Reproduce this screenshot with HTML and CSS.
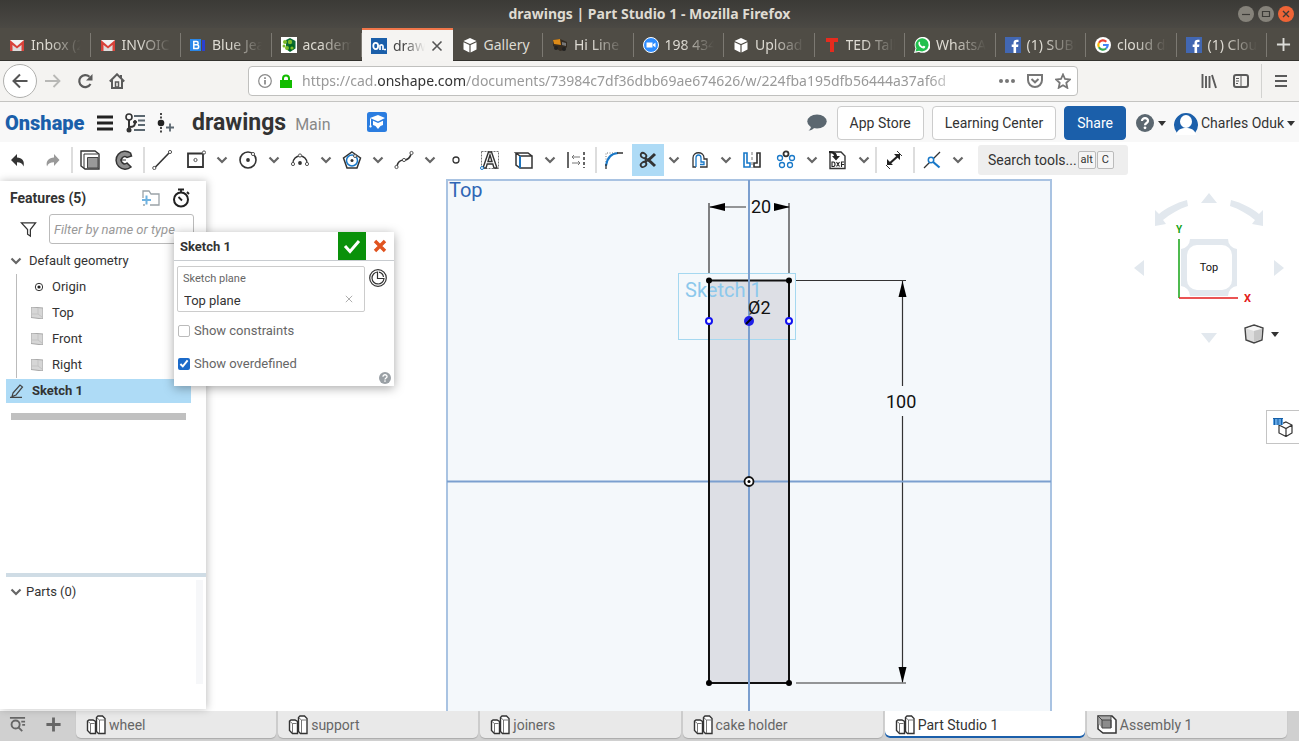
FILE: index.html
```html
<!DOCTYPE html>
<html lang="en">
<head>
<meta charset="utf-8">
<title>drawings | Part Studio 1</title>
<link rel="stylesheet" href="styles.css">
</head>
<body>
<svg class="defs" aria-hidden="true">
  <symbol id="chev" viewBox="0 0 12 8"><path d="M1.500 1.500 6 6l4.500-4.500" fill="none" stroke="#666" stroke-width="2.200"/></symbol>
  <symbol id="gmail" viewBox="0 0 16 16"><path d="M1 3h14v11H1z" fill="#f2f2f2"/><path d="M4 8 1 14h14l-3-6-4 3z" fill="#dcdcdc"/><path d="M1 14V3l7 6 7-6v11h-2.500V8L8 11.500 3.500 8v6z" fill="#d8423a"/></symbol>
  <symbol id="box" viewBox="0 0 16 16"><path d="M8 1 14.500 4 8 7 1.500 4zM1.500 5.200 7.400 8v7.500L1.500 12.500zM14.500 5.200 8.600 8v7.500l5.900-3z" fill="#fff"/></symbol>
  <symbol id="fb" viewBox="0 0 16 16"><path d="M0 0h16v16H0z" fill="#4267b2"/><path d="M8.500 16V10H6.700V7.500h1.800V6c0-2.200 1.200-3.200 3.200-3.200h1.800V5h-1.200c-.9 0-1.200.4-1.200 1.200v1.300h2.300L13.100 10h-2V16z" fill="#fff"/></symbol>
  <symbol id="parts" viewBox="0 0 20 20"><path d="M1.500 6 3 5h4l2.500 1.500v12H4.500l-3-3z" fill="#fff" stroke="#333" stroke-width="1.400"/><path d="M2 6.500 4.500 8.500h4M4.500 8.500V18" fill="none" stroke="#666" stroke-width=".9"/><path d="M10.500 2.500 12 1h4.500L19 3.500v15h-6.500l-2-2z" fill="#fff" stroke="#333" stroke-width="1.400"/><path d="m11 3 2.500 2H18M13.500 5v13" fill="none" stroke="#666" stroke-width=".9"/></symbol>
  <symbol id="plane" viewBox="0 0 12 12"><path d="M0 0 12 1v11L0 10.500z" fill="#d6d6d6" stroke="#a8a8a8"/><path d="M7 1v6H1M7 7l4 3" stroke="#c4c4c4" fill="none"/></symbol>
</svg>

<header class="browser">
  <div class="titlebar">
    <span class="title">drawings | Part Studio 1 - Mozilla Firefox</span>
    <div class="winbtns">
      <button aria-label="Minimize"><svg viewBox="0 0 16 16"><path d="M4 8.500h8" stroke="#3c3b37" stroke-width="1.200"/></svg></button>
      <button aria-label="Maximize"><svg viewBox="0 0 16 16"><path d="M4.500 5.500h7v5h-7z" fill="none" stroke="#3c3b37" stroke-width="1.200"/></svg></button>
      <button class="close" aria-label="Close"><svg viewBox="0 0 16 16"><path d="m5 5 6 6M11 5l-6 6" stroke="#3c3b37" stroke-width="1.400"/></svg></button>
    </div>
  </div>
  <div class="tabs">
    <button class="tab"><svg><use href="#gmail"/></svg><span>Inbox (21)</span></button>
    <button class="tab"><svg><use href="#gmail"/></svg><span>INVOICE</span></button>
    <button class="tab"><svg viewBox="0 0 16 16"><path d="M0 2h11v12H0z" fill="#2a86e8"/><path d="M12 3h3v11h-3z" fill="#2b3fd0"/><path d="M3.800 4.500h2.700c2.200 0 2.200 3.300 0 3.300H3.800zM3.800 7.800h3c2.500 0 2.500 3.700 0 3.700h-3z" fill="none" stroke="#fff" stroke-width="1.500"/></svg><span>Blue Jeans</span></button>
    <button class="tab"><svg viewBox="0 0 16 16"><path d="M0 0h16v16H0z" fill="#fff"/><path d="m9 1 5.500 3v7.500L9 15 5 12V3z" fill="#0b6a35"/><path d="m9 6 4 2v4l-4 2-3-2z" fill="#062"/><g fill="#7dbb28"><circle cx="4" cy="5" r="2"/><circle cx="9" cy="5" r="2.200"/><circle cx="3" cy="9" r="1.500"/><circle cx="6" cy="11" r="2"/><circle cx="11" cy="11" r="1.600"/></g></svg><span>academic</span></button>
    <button class="tab active"><svg viewBox="0 0 16 16"><path d="M0 0h16v16H0z" fill="#1b5faa"/><ellipse cx="4.700" cy="8" rx="2.400" ry="3.100" fill="none" stroke="#fff" stroke-width="1.800"/><path d="M9 12V7.500c1.500-1 3-.7 3 1V12M13 11.500h2" fill="none" stroke="#fff" stroke-width="1.700"/></svg><span>drawings</span><svg class="x" viewBox="0 0 12 12"><path d="m1.500 1.500 9 9M10.500 1.500l-9 9" stroke="#555" stroke-width="1.600"/></svg></button>
    <button class="tab"><svg><use href="#box"/></svg><span class="full">Gallery</span></button>
    <button class="tab"><svg viewBox="0 0 16 16"><path d="M1 3 8 2l7 3v5l-3 3-4 1-7-5z" fill="#332b22"/><path d="m1 3 7-1 1 6-7-1z" fill="#dc8a18"/><path d="m10 5 4 1v3l-4-1z" fill="#777"/><circle cx="4" cy="11" r="2" fill="#222"/><circle cx="12" cy="12" r="2" fill="#222"/></svg><span>Hi Line Tr</span></button>
    <button class="tab"><svg viewBox="0 0 16 16"><circle cx="8" cy="8" r="7.500" fill="#2d8cff" stroke="#fff"/><path d="M3.500 5.500h6v5h-6zM10 7.500l2.500-2v5L10 8.500z" fill="#fff"/></svg><span>198 434 1</span></button>
    <button class="tab"><svg><use href="#box"/></svg><span>Upload a</span></button>
    <button class="tab"><svg viewBox="0 0 16 16"><path d="M2 1h12v4h-4v10H6V5H2z" fill="#e62b1e"/></svg><span>TED Talks</span></button>
    <button class="tab"><svg viewBox="0 0 16 16"><path d="M0 16 1.500 11.500A8 8 0 1 1 5 15z" fill="#fff"/><path d="M1.500 14.500l1-3.300a6.500 6.500 0 1 1 2.700 2.500z" fill="#22c04e"/><path d="M5 4.500c1 0 1.500 1.500 1 2.300.7 1.400 1.500 2.100 2.800 2.600.6-1 1.100-1 2.500 0-.3 2.300-2.100 2.300-3.700 1.500C5 9.500 3.500 7 5 4.500z" fill="#fff"/></svg><span>WhatsApp</span></button>
    <button class="tab"><svg><use href="#fb"/></svg><span>(1) SUBM</span></button>
    <button class="tab"><svg viewBox="0 0 16 16"><circle cx="8" cy="8" r="8" fill="#fff"/><g fill="none" stroke-width="2.200"><path d="M11.300 4.700A4.700 4.700 0 0 0 3.900 5.700" stroke="#ea4335"/><path d="M3.900 5.700a4.700 4.700 0 0 0 0 4.600" stroke="#fbbc05"/><path d="M3.900 10.300a4.700 4.700 0 0 0 7.200 1.200" stroke="#34a853"/><path d="M11.100 11.500A4.700 4.700 0 0 0 12.700 8H8" stroke="#4285f4"/></g></svg><span>cloud dra</span></button>
    <button class="tab"><svg><use href="#fb"/></svg><span>(1) Cloud</span></button>
    <button class="newtab" aria-label="New tab"><svg viewBox="0 0 16 16"><path d="M8 1v14M1 8h14" stroke="#dcdcd8" stroke-width="2"/></svg></button>
  </div>
  <nav class="nav">
    <button class="back" aria-label="Back"><svg viewBox="0 0 16 16"><path d="M15.500 8H1.500M8 1.500 1.500 8 8 14.500" fill="none" stroke="#555" stroke-width="2"/></svg></button>
    <button aria-label="Forward"><svg viewBox="0 0 16 16"><path d="M0 8h14.500M8.500 2l6 6-6 6" fill="none" stroke="#b8b8b6" stroke-width="1.800"/></svg></button>
    <button aria-label="Reload"><svg viewBox="0 0 16 16"><path d="M13.500 11A6 6 0 1 1 12.500 3.800" fill="none" stroke="#5a5a5a" stroke-width="2.200"/><path d="M15.500 1v6.500H9z" fill="#5a5a5a"/></svg></button>
    <button aria-label="Home"><svg viewBox="0 0 16 16"><path d="M.8 8.500 8 1.300l7.200 7.200M3 7v8h10V7M12 2v3" fill="none" stroke="#5a5a5a" stroke-width="2"/><path d="M6.500 9h3v5h-3z" fill="none" stroke="#5a5a5a" stroke-width="1.500"/></svg></button>
    <div class="url">
      <svg class="info" viewBox="0 0 14 14"><circle cx="7" cy="7" r="6.300" fill="none" stroke="#8a8a8a" stroke-width="1.200"/><path d="M7 6v4.500M7 3.200V5" stroke="#777" stroke-width="1.500"/></svg>
      <svg class="lock" viewBox="0 0 12 15"><path d="M0 6h12v8H0z" fill="#12bc00"/><path d="M3 7V4.500a3 3 0 0 1 6 0V7" fill="none" stroke="#12bc00" stroke-width="2"/></svg>
      <span class="address" role="textbox" aria-label="Address" contenteditable="true" spellcheck="false">https://cad.<b>onshape.com</b>/documents/73984c7df36dbb69ae674626/w/224fba195dfb56444a37af6d</span>
      <svg viewBox="0 0 16 16"><g fill="#777"><circle cx="2" cy="8" r="2"/><circle cx="8" cy="8" r="2"/><circle cx="14" cy="8" r="2"/></g></svg>
      <svg viewBox="0 0 16 16"><path d="M1 2h14v5a7 7 0 0 1-14 0z" fill="none" stroke="#777" stroke-width="2"/><path d="m4.500 6 3.500 3.300L11.500 6" fill="none" stroke="#777" stroke-width="2"/></svg>
      <svg viewBox="0 0 16 16"><path d="m8 1.500 2 4.500 5 .5-3.700 3.400 1 4.900L8 12.300l-4.300 2.500 1-4.900L1 6.500 6 6z" fill="none" stroke="#777" stroke-width="1.800"/></svg>
    </div>
    <div class="navright">
      <button aria-label="Library"><svg viewBox="0 0 16 16"><path d="M1.500 1v14M5 3v12M8.500 3v12M11 2l4 13" fill="none" stroke="#5a5a5a" stroke-width="1.900"/></svg></button>
      <button aria-label="Sidebars"><svg viewBox="0 0 16 16"><rect x="1" y="2" width="14" height="12" rx="2" fill="none" stroke="#5a5a5a" stroke-width="2"/><path d="M8 2v12M3 5.500h3M3 8h3M3 10.500h2" stroke="#5a5a5a"/></svg></button>
      <button class="menu" aria-label="Menu"><svg viewBox="0 0 16 16"><path d="M2 3h12M2 8h12M2 13h12" stroke="#5a5a5a" stroke-width="2"/></svg></button>
    </div>
  </nav>
</header>

<header class="appbar">
  <span class="logo">Onshape</span>
  <button aria-label="Menu"><svg viewBox="0 0 20 20"><path d="M2 4h16M2 10h16M2 16h16" stroke="#222" stroke-width="2.800"/></svg></button>
  <button class="versions" aria-label="Versions"><svg viewBox="0 0 20 20"><g fill="none" stroke="#333"><circle cx="4" cy="4" r="3" stroke-width="1.600"/><path d="M4 7v11M4 14c5 0 6-1 6-5" stroke-width="2"/><circle cx="10" cy="9" r="1.500" fill="#333"/></g><circle cx="4" cy="17" r="2.500" fill="#333"/><path d="M9 3h11M13 7.500h7M13 12h7M9 17h11" stroke="#5b6770" stroke-width="1.800"/></svg></button>
  <button aria-label="Create version"><svg viewBox="0 0 20 20"><path d="M6 0v20" stroke="#333" stroke-width="1.800" stroke-dasharray="2 1.500"/><circle cx="6" cy="10" r="3.300" fill="#222"/><path d="M11 14.500h8M15 10.500v8" stroke="#5b6770" stroke-width="1.800"/></svg></button>
  <h1>drawings</h1><span class="branch">Main</span>
  <svg class="edu" viewBox="0 0 20 20"><rect width="20" height="20" rx="2.500" fill="#2b7de0"/><path d="m11 3 7 3-7 3.500L3 6z" fill="#fff"/><path d="m6 8.800 5 2.200 5-2.200V13l-2.500 1-2.500 3-2.500-3L6 13z" fill="#fff"/><path d="M3.500 6.500V13M2.800 15l.7-2.500.7 2.500z" stroke="#fff" fill="#fff"/></svg>
  <div class="appright">
    <svg class="bubble" viewBox="0 0 20 18"><ellipse cx="10" cy="7.500" rx="9.700" ry="7" fill="#5b6770"/><path d="M4 12c0 2-1 3.500-2.500 4.500 3 0 5-1.500 6-3z" fill="#5b6770"/></svg>
    <button class="btn">App Store</button>
    <button class="btn">Learning Center</button>
    <button class="btn primary">Share</button>
    <button class="help" aria-label="Help"><svg viewBox="0 0 20 20"><circle cx="10" cy="10" r="9" fill="#5b6770"/><path d="M7 8c0-4 6.200-3.600 6 0 0 2-3 2-3 4.200" fill="none" stroke="#fff" stroke-width="2.200"/><circle cx="10" cy="14.800" r="1.400" fill="#fff"/></svg><i class="caret"></i></button>
    <button class="user"><svg viewBox="0 0 24 24"><path d="M3 22A12 12 0 1 1 21 22z" fill="#1b5faa"/><ellipse cx="12" cy="10.500" rx="6" ry="6.500" fill="#fff"/><path d="M2 24c1-6 6-7 10-7s9 1 10 7z" fill="#fff"/></svg>Charles Oduk<i class="caret"></i></button>
  </div>
</header>

<div class="toolbar">
  <button aria-label="Undo"><svg viewBox="0 0 20 20"><path d="M9 4v3.500c5 .2 8 3.500 6.500 9-1-3-3-4.300-6.500-4.300V16L3 10z" fill="#333"/></svg></button>
  <button aria-label="Redo"><svg viewBox="0 0 20 20"><path d="M12 4v3.500c-5 .2-8.500 3.500-7 9 1-3 3.500-4.300 7-4.300V16l5.500-6z" fill="#999"/></svg></button>
  <i class="sep"></i>
  <button aria-label="Sketch solid"><svg viewBox="0 0 20 20"><path d="M1 1h14l4 3v15H5l-4-3z" fill="#fff" stroke="#333" stroke-width="1.400"/><path d="M4 18V4h14" fill="none" stroke="#333"/><path d="M7.500 7.500H18V18H7.500z" fill="#999" stroke="#444"/></svg></button>
  <button aria-label="Sketch revolve"><svg viewBox="0 0 20 20"><path d="M16.500 3A9 9 0 1 0 17 17l-4-4a3.500 3.500 0 1 1 0-5.500L17.500 6z" fill="#8e8e8e" stroke="#333" stroke-width="1.500"/><path d="M6 10h6" stroke="#333"/></svg></button>
  <i class="sep"></i>
  <button aria-label="Line"><svg viewBox="0 0 20 20"><path d="M3 17.500 17 3" stroke="#333" stroke-width="1.600"/><circle cx="2.300" cy="18" r="1.600" class="pt"/><circle cx="18" cy="2" r="1.600" class="pt"/></svg></button>
  <button class="dd" aria-label="Rectangle"><svg viewBox="0 0 20 20"><path d="M2 3.500h15V17H2z" fill="none" stroke="#333" stroke-width="1.800"/><circle cx="9.500" cy="10" r="1.600" class="pt"/><circle cx="18" cy="2.500" r="1.600" class="pt"/></svg></button>
  <button class="chev" aria-label="More"><svg><use href="#chev"/></svg></button>
  <button class="dd" aria-label="Circle"><svg viewBox="0 0 20 20"><circle cx="10" cy="10" r="8" fill="none" stroke="#333" stroke-width="1.600"/><circle cx="10" cy="10" r="1.900" fill="#333"/><circle cx="15" cy="4" r="1.600" class="pt"/></svg></button>
  <button class="chev" aria-label="More"><svg><use href="#chev"/></svg></button>
  <button class="dd" aria-label="Arc"><svg viewBox="0 0 20 20"><path d="M3 13a7 7 0 0 1 14 0" fill="none" stroke="#333" stroke-width="1.500"/><circle cx="10" cy="13" r="1.900" fill="#333"/><circle cx="10" cy="5.500" r="1.600" class="pt"/><circle cx="3" cy="14" r="1.600" class="pt"/><circle cx="17" cy="14" r="1.600" class="pt"/></svg></button>
  <button class="chev" aria-label="More"><svg><use href="#chev"/></svg></button>
  <button class="dd" aria-label="Polygon"><svg viewBox="0 0 20 20"><path d="m10 2 8.500 6-3.500 10H5L1.500 8z" fill="none" stroke="#333" stroke-width="1.500"/><circle cx="10" cy="10.500" r="5.500" fill="none" stroke="#1878c8" stroke-width="1.500"/><circle cx="10" cy="10.500" r="1.500" fill="#333"/><circle cx="13" cy="6" r="1.500" class="pt"/></svg></button>
  <button class="chev" aria-label="More"><svg><use href="#chev"/></svg></button>
  <button class="dd" aria-label="Spline"><svg viewBox="0 0 20 20"><path d="M3 16c1-5 4-6 7-6s6-2 7-6" fill="none" stroke="#333" stroke-width="1.600"/><circle cx="2.500" cy="17" r="1.600" class="pt"/><circle cx="10" cy="10" r="1.600" class="pt"/><circle cx="17.500" cy="3" r="1.600" class="pt"/></svg></button>
  <button class="chev" aria-label="More"><svg><use href="#chev"/></svg></button>
  <button aria-label="Point"><svg viewBox="0 0 20 20"><circle cx="10" cy="10" r="3" fill="#fff" stroke="#333" stroke-width="1.300"/></svg></button>
  <button aria-label="Text"><svg viewBox="0 0 20 20"><path d="M1.500 1.500h17v17h-17z" fill="none" stroke="#777" stroke-dasharray="2 1"/><path d="M3 18 8.500 2h3L17 18h-3l-1.200-4H7.200L6 18zM8 11.500h4L10 5z" fill="#fff" stroke="#333" stroke-width="1.400"/><circle cx="2" cy="18" r="1.500" fill="#fff" stroke="#1878c8"/></svg></button>
  <button class="dd" aria-label="Use"><svg viewBox="0 0 20 20"><path d="M6 6h12v12H6zM6 6 2 3h12l4 3M2 3v12l4 3" fill="none" stroke="#333" stroke-width="1.500"/><path d="M6 6v12" stroke="#1878c8" stroke-width="1.800"/></svg></button>
  <button class="chev" aria-label="More"><svg><use href="#chev"/></svg></button>
  <button aria-label="Construction"><svg viewBox="0 0 20 20"><path d="M2 2v16" stroke="#333" stroke-width="1.500"/><path d="M18 2v16" stroke="#333" stroke-width="1.500" stroke-dasharray="3 2"/><path d="M6 7h8M6 13h8M8 5 6 7l2 2M12 11l2 2-2 2" fill="none" stroke="#777"/></svg></button>
  <i class="sep"></i>
  <button aria-label="Fillet"><svg viewBox="0 0 20 20"><path d="M2 12V3h11" fill="none" stroke="#777" stroke-dasharray="1 1.500"/><path d="M2 16C3 8 7 3.500 14 3" fill="none" stroke="#1878c8" stroke-width="2"/><path d="M13 3h6M2 14v5" stroke="#333" stroke-width="1.300"/></svg></button>
  <button class="dd on" aria-label="Trim"><svg viewBox="0 0 20 20"><g fill="none" stroke="#333"><ellipse cx="5.500" cy="5.500" rx="3" ry="2.300" transform="rotate(35 5.500 5.500)" stroke-width="1.800"/><ellipse cx="5.500" cy="14.500" rx="3" ry="2.300" transform="rotate(-35 5.500 14.500)" stroke-width="1.800"/><path d="M7.500 7.500V12M7.500 8l4 3M7.500 12l4-3" stroke-width="1.600"/><path d="M9.500 11 17 4M9.500 9l7.500 7" stroke-width="3"/></g></svg></button>
  <button class="chev" aria-label="More"><svg><use href="#chev"/></svg></button>
  <button class="dd" aria-label="Offset"><svg viewBox="0 0 20 20"><path d="M6 17H3V8c0-7 11-7 11 0v1h3v8h-7" fill="none" stroke="#333" stroke-width="1.300"/><path d="M6 17V8c0-4 5-4 5 0v4h3v2.500h-4" fill="none" stroke="#1878c8" stroke-width="1.300"/></svg></button>
  <button class="chev" aria-label="More"><svg><use href="#chev"/></svg></button>
  <button aria-label="Mirror"><svg viewBox="0 0 20 20"><path d="M2 3h3v10h3v4H2z" fill="none" stroke="#1878c8" stroke-width="1.600"/><path d="M18 3h-3v10h-3v4h6z" fill="none" stroke="#333" stroke-width="1.600"/><path d="M10 2v16" stroke="#777" stroke-dasharray="3 2"/></svg></button>
  <button class="dd" aria-label="Pattern"><svg viewBox="0 0 20 20"><circle cx="10" cy="3.800" r="2.500" fill="none" stroke="#333" stroke-width="1.800"/><g fill="none" stroke="#1878c8" stroke-width="1.300"><circle cx="4" cy="8" r="2.500"/><circle cx="16" cy="8" r="2.500"/><circle cx="6" cy="15" r="2.500"/><circle cx="14" cy="15" r="2.500"/></g></svg></button>
  <button class="chev" aria-label="More"><svg><use href="#chev"/></svg></button>
  <button class="dd" aria-label="Insert DXF"><svg viewBox="0 0 20 20"><path d="M2 9V2h11l4 4v12.500H2z" fill="#fff" stroke="#333" stroke-width="1.400"/><path d="M1 1c5 0 8 2 8 5h3l-4 4.500L4 6h2C6 4 4 3 1 3z" fill="#222"/><path d="M4 12v4.500h1.500c2 0 2-4.500 0-4.500zM8.500 12l3 4.500M11.500 12l-3 4.500M13.500 17v-5H16M13.500 14.500H16" fill="none" stroke="#222" stroke-width="1.100"/></svg></button>
  <button class="chev" aria-label="More"><svg><use href="#chev"/></svg></button>
  <i class="sep"></i>
  <button aria-label="Dimension"><svg viewBox="0 0 20 20"><path d="m5 14 9-8" stroke="#222" stroke-width="2.200"/><path d="M3 15V9l6 6zM16 4v6l-6-6z" fill="#222"/><path d="m2 15 4 4M13 1l5 5" stroke="#333"/></svg></button>
  <i class="sep"></i>
  <button class="dd" aria-label="Constraint"><svg viewBox="0 0 20 20"><path d="M2 18 18 2" stroke="#333" stroke-width="1.300"/><path d="m10 11 7.500 6.500" stroke="#1878c8" stroke-width="2.200"/><circle cx="9" cy="10" r="2.700" fill="#fff" stroke="#1878c8" stroke-width="1.500"/></svg></button>
  <button class="chev" aria-label="More"><svg><use href="#chev"/></svg></button>
  <button class="search">Search tools...<kbd>alt</kbd><kbd>C</kbd></button>
</div>

<main class="work">
  <aside class="side">
    <section class="features">
      <div class="sidehead"><h2>Features (5)</h2>
        <button aria-label="Add folder"><svg viewBox="0 0 20 18"><path d="M2 9V2h6l2 3h8v11H9M2 16h2" fill="none" stroke="#9aa3a8" stroke-width="1.300"/><path d="M1 11h9M5.500 6.500v9" stroke="#6fb2e0" stroke-width="2"/></svg></button>
        <button aria-label="Rebuild times"><svg viewBox="0 0 20 20"><circle cx="10" cy="11.500" r="7" fill="none" stroke="#222" stroke-width="2"/><path d="M7 1.500h6M10 2v3M16 4l2 2M7.500 9l3.500 3.500" stroke="#222" stroke-width="1.800"/></svg></button>
      </div>
      <div class="filter"><svg viewBox="0 0 18 18"><path d="M1.500 2h15L11 9v7l-3-2V9z" fill="none" stroke="#333" stroke-width="1.300"/></svg><input type="text" aria-label="Filter" placeholder="Filter by name or type"></div>
      <div class="group"><svg><use href="#chev"/></svg>Default geometry</div>
      <ul>
        <li><svg viewBox="0 0 12 12"><circle cx="8" cy="6" r="3.700" fill="none" stroke="#333"/><circle cx="8" cy="6" r="1.600" fill="#222"/></svg>Origin</li>
        <li><svg><use href="#plane"/></svg>Top</li>
        <li><svg><use href="#plane"/></svg>Front</li>
        <li><svg><use href="#plane"/></svg>Right</li>
      </ul>
      <div class="selected"><svg viewBox="0 0 14 14"><path d="m3 9 7-8 2.500 2L6 11l-4 1.500zM0 13.400h12" fill="none" stroke="#444" stroke-width="1.200"/></svg>Sketch 1</div>
      <div class="rollback"></div>
    </section>
    <section class="partlist"><div class="group"><svg><use href="#chev"/></svg>Parts (0)</div><div class="track"></div></section>
  </aside>

  <div class="canvas">
    <svg class="drawing" viewBox="206 179 1093 532" preserveAspectRatio="xMidYMin slice" role="img" aria-label="Sketch of a 20 by 100 rectangle">
      <rect x="447" y="180" width="604" height="603" fill="#f4f8fb" stroke="#a9c3e2" stroke-width="2"/>
      <rect x="709" y="281" width="80" height="402" fill="#dddfe5"/>
      <rect x="678.500" y="273.500" width="117" height="66" fill="none" stroke="#a5d8f0"/>
      <g stroke="#333" stroke-width="1.200" fill="none"><path d="M709 203v70M789 203v70M710 207h36M775 207h14M796 280.500h110M796 683h110M902.500 281v105M902.500 416v266"/></g>
      <path d="m709 207 16-4v8zM790 207l-16-4v8zM902.500 281l-4 16h8zM902.500 683l-4-16h8z" fill="#000"/>
      <rect x="709" y="280.500" width="80" height="402.500" fill="none" stroke="#111" stroke-width="2"/>
      <text x="685" y="297" font-size="20" fill="#8cc8ec">Sketch 1</text>
      <path d="M749 180v531M447 481.500h604" stroke="#7b9fcf" stroke-width="2"/>
      <path d="M709 281v402M789 281v402" stroke="#111" stroke-width="2"/>
      <g fill="#000"><circle cx="709" cy="280.500" r="3"/><circle cx="789" cy="280.500" r="3"/><circle cx="709" cy="683" r="3"/><circle cx="789" cy="683" r="3"/></g>
      <g fill="#fff" stroke="#1212f0" stroke-width="2"><circle cx="709" cy="321" r="3"/><circle cx="789" cy="321" r="3"/></g>
      <circle cx="749" cy="321" r="5" fill="#1f1fe8"/><path d="m746 324 6-6" stroke="#001" stroke-width="2"/>
      <circle cx="749" cy="481.500" r="4.500" fill="#fff" stroke="#111" stroke-width="1.800"/><circle cx="749" cy="481.500" r="1.500"/>
      <text x="449" y="197" font-size="20" fill="#2f66b5">Top</text>
      <g font-size="18" fill="#111"><text x="751" y="213">20</text><text x="748" y="314">Ø2</text><text x="886" y="408">100</text></g>
    </svg>

    <svg class="cube" viewBox="0 0 160 160" role="img" aria-label="View cube">
      <g fill="#e2e8ee"><path d="M79 2 87 12H71zM79 152l8-10H71zM4 77l10-8v16zM154 77l-10-8v16z"/>
      <path d="M57 9C46 12 36 17 29 23l-4-4v16l11-2-3-4c7-6 16-11 25-14zM101 9c11 3 21 8 28 14l4-4v16l-11-2 3-4c-7-6-16-11-25-14z"/>
      <path d="M60 48h38a10 10 0 0 0 9 10v37a10 10 0 0 0-9 10H60a10 10 0 0 0-9-10V58a10 10 0 0 0 9-10z"/></g>
      <rect x="57" y="54" width="45" height="45" rx="10" fill="#fff"/>
      <path d="M49 48v59" stroke="#15a315" stroke-width="1.500"/><path d="M49 107h59" stroke="#e31b1b" stroke-width="1.500"/>
      <text x="79" y="80" text-anchor="middle" font-size="11" fill="#111">Top</text>
      <text x="46" y="42" font-size="10" font-weight="700" fill="#15a315">Y</text><text x="114" y="111" font-size="11" font-weight="700" fill="#e31b1b">X</text>
    </svg>
    <button class="shade" aria-label="Shading"><svg viewBox="0 0 20 20"><path d="m10 1 9 3-1 12-8 3-8-3L1 4z" fill="#ddd" stroke="#444" stroke-width="1.400"/><path d="m2 4.500 8 2.500 8-2.500L10 2z" fill="#f6f6f6"/><path d="M10 7v11l7-3 1-10z" fill="#c6c6c6"/></svg><i class="caret"></i></button>
    <button class="config" aria-label="Tables"><svg viewBox="0 0 20 20"><path d="m13 5 6 3v8l-6 3.500-7-3.500V8zM6 8l7 3.500L19 8M13 11.500v8" fill="#fff" stroke="#333" stroke-width="1.200"/><path d="M0 1h10v7H0z" fill="#62a5e2"/><path d="M0 1.500h10M1.500 1v7M5 1v7M8.500 1v7" stroke="#155fa8"/></svg></button>
  </div>

  <form class="dialog">
    <div class="dhead"><h3>Sketch 1</h3><button type="button" class="ok" aria-label="Accept"><svg viewBox="0 0 20 20"><path d="m3 10 5 5.500L17 5" fill="none" stroke="#fff" stroke-width="3"/></svg></button><button type="button" class="no" aria-label="Cancel"><svg viewBox="0 0 20 20"><path d="m5 5 10 10M15 5 5 15" stroke="#e0531f" stroke-width="3.400"/></svg></button></div>
    <div class="dbody">
      <div class="field"><label for="pl">Sketch plane</label><div><input id="pl" type="text" value="Top plane"><button type="button" aria-label="Clear"><svg viewBox="0 0 10 10"><path d="m1 1 8 8M9 1 1 9" stroke="#aaa" stroke-width="1.200"/></svg></button></div></div>
      <svg class="final" viewBox="0 0 18 18"><circle cx="9" cy="9" r="8.300" fill="none" stroke="#333" stroke-width="1.200"/><path d="M8.500 3A6 6 0 1 0 15 9.500H8.500zM10 3.200A6 6 0 0 1 14.500 8" fill="none" stroke="#333" stroke-width="1.200"/></svg>
    </div>
    <label class="check"><input type="checkbox">Show constraints</label>
    <label class="check second"><input type="checkbox" checked>Show overdefined</label>
    <svg class="q" viewBox="0 0 18 18"><circle cx="9" cy="9" r="9" fill="#9aa0a5"/><path d="M6 7c0-4 6.200-3.600 6 0 0 2-3 2-3 4.200" fill="none" stroke="#fff" stroke-width="2"/><circle cx="9" cy="13.500" r="1.300" fill="#fff"/></svg>
  </form>
</main>

<footer class="doctabs">
  <button class="tool" aria-label="Tab manager"><svg viewBox="0 0 18 18"><path d="M1 2h16M13 6h4M14 9.500h3" stroke="#666" stroke-width="1.800"/><circle cx="7" cy="9" r="4.300" fill="none" stroke="#666" stroke-width="2"/><path d="m10 12 4 4" stroke="#666" stroke-width="2"/></svg></button>
  <button class="tool" aria-label="Add tab"><svg viewBox="0 0 18 18"><path d="M9 1.500v15M1.500 9h15" stroke="#666" stroke-width="3"/></svg></button>
  <button class="dt"><svg><use href="#parts"/></svg>wheel</button>
  <button class="dt"><svg><use href="#parts"/></svg>support</button>
  <button class="dt"><svg><use href="#parts"/></svg>joiners</button>
  <button class="dt"><svg><use href="#parts"/></svg>cake holder</button>
  <button class="dt current"><svg><use href="#parts"/></svg>Part Studio 1</button>
  <button class="dt"><svg viewBox="0 0 20 20"><path d="M1 1h14l4 4v13H6l-5-4z" fill="#fff" stroke="#333" stroke-width="1.500"/><path d="M1.500 1.500H14V13H5L1.500 9z" fill="#aaa"/><path d="M5 5h9v8H5zM1 1l4 4M14 1v12" fill="#8c8c8c" stroke="#444"/></svg>Assembly 1</button>
</footer>
</body>
</html>
```

FILE: styles.css
```css
* { box-sizing: border-box; }
body {
  margin: 0;
  height: 100vh;
  display: flex;
  flex-direction: column;
  overflow: hidden;
  background: #fff;
  color: #333;
  font: 14px/18px Roboto, "Liberation Sans", sans-serif;
}
button, input { font: inherit; color: inherit; }
button {
  display: flex;
  align-items: center;
  justify-content: center;
  padding: 0;
  border: 0;
  background: none;
}
svg { display: block; flex: none; }
h1, h2, h3 { margin: 0; }
.defs { position: absolute; width: 0; height: 0; }
.caret {
  border: 4px solid transparent;
  border-top: 5px solid #333;
  border-bottom: 0;
}

/* browser window */
.browser { font-family: "Noto Sans", "Open Sans", sans-serif; }
.titlebar {
  display: grid;
  grid-template-columns: 1fr auto 1fr;
  align-items: center;
  height: 28px;
  background: linear-gradient(#3b3a36, #4b4944);
  color: #dfdbd2;
}
.title { grid-column: 2; font-weight: 700; }
.winbtns { display: flex; justify-content: flex-end; gap: 4px; padding-right: 5px; }
.winbtns button { width: 16px; height: 16px; border-radius: 50%; background: #85827a; }
.winbtns .close { background: #ee6436; }
.winbtns svg { width: 16px; height: 16px; }
.tabs { display: flex; height: 33px; background: #4f4c45; border-bottom: 1px solid #33322e; }
.tab {
  flex: 1 1 0;
  min-width: 0;
  justify-content: flex-start;
  gap: 6px;
  padding: 2px 10px 0 9px;
  color: #dedbd3;
  background: linear-gradient(#7c7972, #7c7972) right 5px / 1px 24px no-repeat;
}
.tab svg { width: 16px; height: 16px; }
.tab span {
  flex: 1;
  min-width: 0;
  overflow: hidden;
  white-space: nowrap;
  text-align: left;
  mask-image: linear-gradient(90deg, #000 35%, transparent);
}
.tab .full { mask-image: none; overflow: visible; }
.tab.active { height: 33px; padding-top: 0; background: #f5f4f2; border-top: 2px solid #f0764a; color: #444; }
.tab .x { width: 12px; height: 12px; }
.newtab { width: 32px; }
.newtab svg { width: 15px; height: 15px; }
.nav {
  display: flex;
  align-items: center;
  height: 41px;
  padding-left: 3px;
  background: #f4f3f1;
  border-bottom: 1px solid #c4c4c2;
}
.nav > button { width: 32px; }
.nav svg { width: 16px; height: 16px; }
.nav > .back { width: 34px; height: 34px; border: 1px solid #b0b0ae; border-radius: 50%; background: #fff; }
.url {
  flex: 1;
  min-width: 0;
  display: flex;
  align-items: center;
  gap: 12px;
  height: 30px;
  margin: 0 115px 0 115px;
  padding: 0 6px 0 9px;
  background: #fff;
  border: 1px solid #c0c0be;
  border-radius: 4px;
}
.url .info { width: 14px; height: 14px; }
.url .lock { width: 12px; height: 15px; margin-left: -4px; }
.address {
  flex: 1;
  min-width: 0;
  margin-left: -2px;
  margin-right: 24px;
  overflow: hidden;
  white-space: nowrap;
  color: #999;
  mask-image: linear-gradient(90deg, #000 95%, transparent);
}
.address b { font-weight: 400; color: #333; }
.navright { display: flex; align-self: stretch; }
.navright button { width: 32px; }
.navright .menu { width: 38px; margin: 3px 0 3px 4px; border-left: 1px solid #d2d2d0; }

/* document header */
.appbar { display: flex; align-items: center; height: 40px; padding: 2px 4px 0 5px; background: #f8f8f8; }
.logo { width: 90px; color: #1b5faa; font: 900 20px/24px Roboto, sans-serif; }
.appbar button svg { width: 20px; height: 20px; }
.appbar .versions { margin: 0 10px; }
.appbar h1 { margin: 0 9px 0 17px; font: 700 23px/28px Roboto, sans-serif; }
.branch { padding-top: 4px; color: #888; font-size: 16px; }
.edu { width: 20px; height: 20px; margin: -2px 0 0 36px; }
.appright { display: flex; align-items: center; gap: 8px; margin-left: auto; }
.bubble { width: 20px; height: 18px; margin-right: 2px; }
.btn { height: 34px; padding: 0 12px; border: 1px solid #ccc; border-radius: 4px; background: #fff; }
.btn.primary { background: #1b5faa; border-color: #1b5faa; color: #fff; }
.help { gap: 3px; margin-left: 1px; }
.user { gap: 3px; }
.appbar .user svg { width: 24px; height: 24px; }

/* sketch tools */
.toolbar { display: flex; align-items: center; height: 37px; padding: 0 0 2px 2px; }
.toolbar button { width: 32px; height: 32px; margin-right: 2px; }
.toolbar button svg { width: 20px; height: 20px; }
.toolbar .dd { margin-right: 0; }
.toolbar .on { background: #aedbf6; }
.toolbar .chev { width: 20px; margin: 0; }
.toolbar .chev svg { width: 12px; height: 8px; }
.sep { width: 2px; height: 26px; margin: 0 1px; background: #ddd; }
.pt { fill: #fff; stroke: #555; stroke-width: 1; }
.toolbar .search {
  width: 150px;
  height: 30px;
  margin-left: 10px;
  padding-left: 10px;
  justify-content: flex-start;
  border-radius: 3px;
  background: #eee;
}
kbd {
  margin-left: 1px;
  padding: 0 4px;
  border: 1px solid #bbb;
  border-radius: 2px;
  background: #f5f5f5;
  font: 11px/16px Roboto, sans-serif;
}
kbd:first-of-type { margin-left: 1px; padding: 0 2px; }

/* work area */
.work { position: relative; flex: 1; min-height: 0; display: flex; }
.side {
  width: 206px;
  margin: 2px 0;
  display: flex;
  flex-direction: column;
  background: #fff;
  box-shadow: 1px 0 8px rgba(0, 0, 0, .25);
  z-index: 1;
  font-size: 13px;
}
.features { flex: 1; margin-left: 6px; border-bottom: 4px solid #cfdce5; }
.sidehead { display: flex; align-items: center; gap: 10px; height: 33px; padding: 0 15px 0 4px; }
.sidehead h2 { flex: 1; font-size: 14px; line-height: 18px; }
.sidehead svg { width: 20px; height: 20px; }
.filter { display: flex; align-items: center; gap: 12px; padding: 0 12px 0 14px; }
.filter svg { width: 17px; height: 17px; }
.filter input {
  flex: 1;
  min-width: 0;
  height: 30px;
  padding: 0 4px;
  border: 1px solid #bbb;
  border-radius: 3px;
  outline: 0;
  font-style: italic;
}
.filter input::placeholder { color: #999; }
.group { display: flex; align-items: center; gap: 7px; height: 26px; padding-left: 4px; }
.group svg { width: 12px; height: 8px; }
.filter + .group { margin-top: 4px; }
ul { list-style: none; margin: 0 0 0 10px; padding: 0; border-left: 1px solid #bbb; }
li { display: flex; align-items: center; gap: 9px; height: 26px; padding-left: 14px; }
li svg { width: 12px; height: 12px; }
.selected {
  display: flex;
  align-items: center;
  gap: 8px;
  height: 24px;
  margin: 1px 15px 10px 0;
  padding-left: 4px;
  background: #aedbf6;
  font-weight: 700;
}
.selected svg { width: 14px; height: 14px; }
.rollback { height: 7px; margin: 0 20px 0 5px; background: #c0c0c0; }
.partlist { display: flex; justify-content: space-between; height: 132px; padding: 2px 3px 0 6px; }
.partlist .group { gap: 4px; }
.track { width: 7px; height: 104px; margin-top: 1px; background: #f6f7f9; }
.canvas { position: relative; flex: 1; min-width: 0; background: #fff; }
.drawing { width: 100%; height: 100%; }
.cube { position: absolute; top: 12px; right: 9px; width: 160px; height: 160px; }
.shade { position: absolute; top: 145px; right: 20px; gap: 7px; }
.shade svg { width: 20px; height: 20px; }
.config {
  position: absolute;
  top: 231px;
  right: 0;
  width: 33px;
  height: 34px;
  border: 1px solid #c4c4c4;
  border-right: 0;
  background: #fff;
}
.config svg { width: 20px; height: 20px; }

/* sketch dialog floats over the canvas */
.dialog {
  position: absolute;
  left: 174px;
  top: 53px;
  width: 220px;
  padding-bottom: 13px;
  z-index: 2;
  background: #fff;
  box-shadow: 0 2px 10px rgba(0, 0, 0, .35);
  color: #666;
  font-size: 13px;
}
.dhead { display: flex; align-items: center; border-bottom: 1px solid #c8ccd0; }
.dhead h3 { flex: 1; padding: 2px 0 0 6px; font-size: 13px; line-height: 18px; color: #333; }
.dhead button { width: 28px; height: 28px; }
.dhead .ok { background: #0a910a; }
.dhead svg { width: 20px; height: 20px; }
.dbody { display: flex; gap: 4px; padding: 5px 3px 10px; }
.field { width: 188px; padding: 3px 5px 2px; border: 1px solid #ccc; border-radius: 2px; }
.field label { display: block; font-size: 11px; line-height: 18px; }
.field div { display: flex; }
.field input { flex: 1; min-width: 0; height: 21px; padding: 3px 0 0 1px; border: 0; outline: 0; color: #333; }
.field button { width: 20px; }
.field button svg { width: 8px; height: 8px; }
.final { width: 18px; height: 18px; margin-top: 3px; }
.check { display: flex; align-items: center; gap: 4px; padding-left: 4px; height: 18px; }
.check input { width: 12px; height: 12px; margin: 0; accent-color: #1b6ac9; }
.check input:not(:checked) { appearance: none; border: 1px solid #bbb; border-radius: 2px; background: #fff; }
.second { margin-top: 15px; }
.q { position: absolute; right: 3px; bottom: 2px; width: 12px; height: 12px; }

/* document tabs */
.doctabs { display: flex; height: 30px; padding: 0 10px 3px 0; background: #d0d0d0; }
.tool { width: 34px; }
.tool + .tool { width: 42px; padding-right: 4px; }
.tool svg { width: 17px; height: 17px; }
.dt {
  flex: 1;
  justify-content: flex-start;
  gap: 3px;
  padding-left: 10px;
  margin-right: 2px;
  border-radius: 0 0 5px 5px;
  background: #e9e9e9;
  color: #666;
  box-shadow: 0 1px 1px #aaa;
}
.dt svg { width: 20px; height: 20px; }
.dt.current { background: #fff; color: #333; box-shadow: inset 0 -2px #1b5faa; }
```
